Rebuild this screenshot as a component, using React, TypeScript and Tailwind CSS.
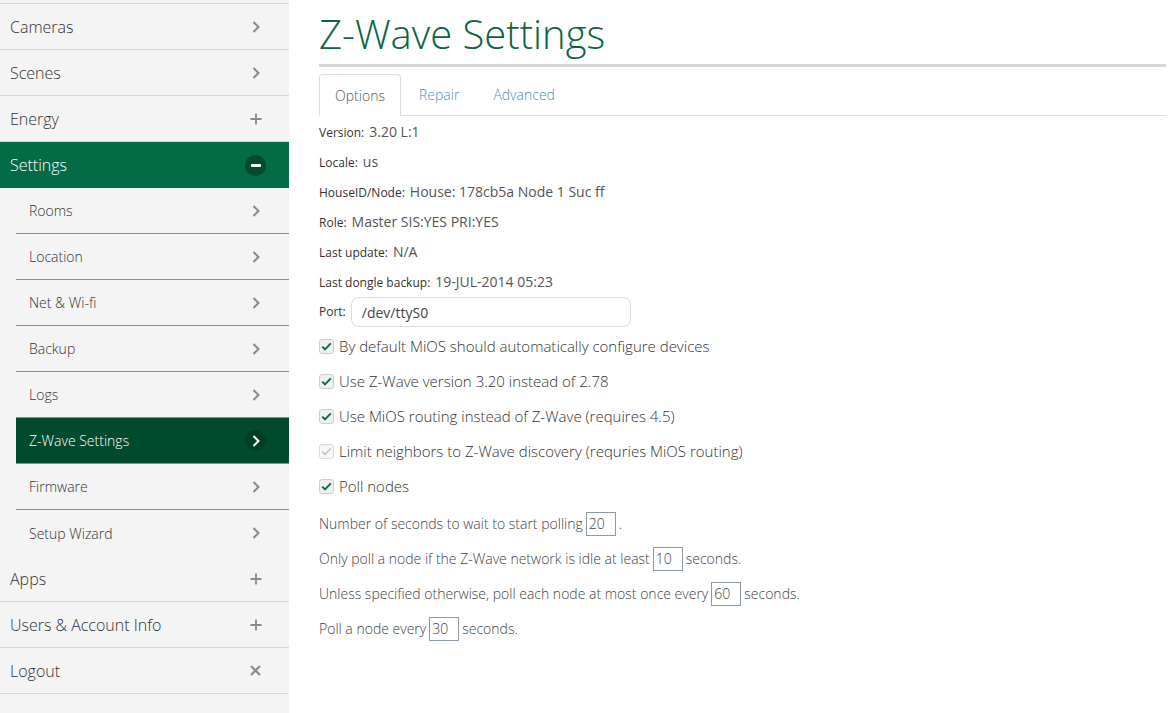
import React from "react";

const Chevron = ({ className = "" }: { className?: string }) => (
  <svg width="10" height="14" viewBox="0 0 10 14" className={className}>
    <path d="M2.5 2 L7.5 7 L2.5 12" fill="none" stroke="currentColor" strokeWidth="2" />
  </svg>
);

const Plus = () => (
  <svg width="12" height="12" viewBox="0 0 12 12">
    <path d="M6 0.5 V11.5 M0.5 6 H11.5" stroke="currentColor" strokeWidth="1.8" />
  </svg>
);

const Times = () => (
  <svg width="11" height="11" viewBox="0 0 11 11">
    <path d="M1 1 L10 10 M10 1 L1 10" stroke="currentColor" strokeWidth="2.2" />
  </svg>
);

type Item = { label: string; icon: "chev" | "plus" | "x" | "minus"; sub?: boolean; active?: boolean; open?: boolean };

const items: Item[] = [
  { label: "Cameras", icon: "chev" },
  { label: "Scenes", icon: "chev" },
  { label: "Energy", icon: "plus" },
  { label: "Settings", icon: "minus", open: true },
  { label: "Rooms", icon: "chev", sub: true },
  { label: "Location", icon: "chev", sub: true },
  { label: "Net & Wi-fi", icon: "chev", sub: true },
  { label: "Backup", icon: "chev", sub: true },
  { label: "Logs", icon: "chev", sub: true },
  { label: "Z-Wave Settings", icon: "chev", sub: true, active: true },
  { label: "Firmware", icon: "chev", sub: true },
  { label: "Setup Wizard", icon: "chev", sub: true },
  { label: "Apps", icon: "plus" },
  { label: "Users & Account Info", icon: "plus" },
  { label: "Logout", icon: "x" },
];

function SideItem({ it, next }: { it: Item; next?: Item }) {
  const subLine = it.sub && next?.sub;
  if (it.open) {
    return (
      <div className="h-[46px] flex items-center justify-between bg-[#036b45] text-white pl-[10px] pr-[23px] text-[16px] font-light">
        <span>{it.label}</span>
        <span className="w-[21px] h-[21px] rounded-full bg-[#034a2f] flex items-center justify-center">
          <span className="block w-[10px] h-[3px] bg-white rounded-[1px]" />
        </span>
      </div>
    );
  }
  if (it.sub) {
    return (
      <div className="pl-[16px]">
        <div
          className={
            "h-[46px] flex items-center justify-between pl-[13px] pr-[23px] text-[14px] font-light " +
            (it.active ? "bg-[#004a2d] text-white " : "text-[#333] ") +
            (subLine ? "border-b border-[#8c8c8c]" : "")
          }
        >
          <span>{it.label}</span>
          {it.active ? (
            <span className="w-[21px] h-[21px] rounded-full bg-[#003f26] flex items-center justify-center text-white">
              <Chevron />
            </span>
          ) : (
            <span className="w-[21px] flex justify-center text-[#8a8a8a]">
              <Chevron />
            </span>
          )}
        </div>
      </div>
    );
  }
  return (
    <div className="h-[46px] flex items-center justify-between pl-[10px] pr-[23px] text-[16px] font-light text-[#333] border-b border-[#d6d6d6]">
      <span>{it.label}</span>
      <span className="w-[21px] flex justify-center text-[#8a8a8a]">
        {it.icon === "chev" && <Chevron />}
        {it.icon === "plus" && <Plus />}
        {it.icon === "x" && <Times />}
      </span>
    </div>
  );
}

const Check = ({ disabled }: { disabled?: boolean }) => (
  <span
    className={
      "inline-flex w-[15px] h-[15px] rounded-[3px] border items-center justify-center mr-[5px] shrink-0 " +
      (disabled ? "border-[#dcdcdc] bg-[#f7f7f7]" : "border-[#cfcfcf] bg-[#efefef]")
    }
  >
    <svg width="11" height="9" viewBox="0 0 11 9">
      <path
        d="M1.2 4.6 L4 7.3 L9.8 1.3"
        fill="none"
        stroke={disabled ? "#c8c8c8" : "#0e6b44"}
        strokeWidth="1.9"
      />
    </svg>
  </span>
);

const NumBox = ({ v }: { v: string }) => (
  <span className="inline-flex items-center w-[30px] h-[24px] border border-[#8c9aa6] px-[2px] mx-[3px] text-[14px] text-[#444]">
    {v}
  </span>
);

export default function App() {
  const info: [string, string][] = [
    ["Version:", "3.20 L:1"],
    ["Locale:", "us"],
    ["HouseID/Node:", "House: 178cb5a Node 1 Suc ff"],
    ["Role:", "Master SIS:YES PRI:YES"],
    ["Last update:", "N/A"],
    ["Last dongle backup:", "19-JUL-2014 05:23"],
  ];
  const checks: [string, boolean][] = [
    ["By default MiOS should automatically configure devices", false],
    ["Use Z-Wave version 3.20 instead of 2.78", false],
    ["Use MiOS routing instead of Z-Wave (requires 4.5)", false],
    ["Limit neighbors to Z-Wave discovery (requries MiOS routing)", true],
    ["Poll nodes", false],
  ];
  return (
    <div
      className="flex w-[1169px] h-[713px] bg-white overflow-hidden"
      style={{ fontFamily: '"Open Sans", "Noto Sans", sans-serif' }}
    >
      <div className="w-[289px] shrink-0 bg-[#f4f4f4] h-full">
        <div className="h-[4px] border-b border-[#d6d6d6]" />
        {items.map((it, i) => (
          <SideItem key={it.label} it={it} next={items[i + 1]} />
        ))}
      </div>
      <div className="flex-1 pl-[30px] pr-[3px]">
        <h1 className="text-[40px] font-light leading-none text-[#0b6442] pt-[14px] h-[64px]">
          Z-Wave Settings
        </h1>
        <div className="h-[3px] bg-[#d6d6d6]" />
        <div className="mt-[7px] flex border-b border-[#dddddd] h-[42px] font-light">
          <div className="w-[82px] h-[42px] border border-[#dddddd] border-b-white rounded-t-[4px] bg-white flex items-center justify-center text-[14px] text-[#555] -mb-px">
            Options
          </div>
          <div className="px-[18px] flex items-center text-[14px] text-[#4f8dba]">Repair</div>
          <div className="px-[16px] flex items-center text-[14px] text-[#4f8dba]">Advanced</div>
        </div>
        <div>
          {info.map(([l, v]) => (
            <div key={l} className="h-[30px] flex items-baseline pt-[5px] text-[#333]">
              <span className="text-[12px]">{l}</span>
              <span className="text-[14px] text-[#555] ml-[5px]">{v}</span>
            </div>
          ))}
          <div className="flex items-center h-[30px] mt-[1px]">
            <span className="text-[12px] text-[#333]">Port:</span>
            <div className="ml-[5px] w-[280px] h-[30px] rounded-[8px] border border-[#dddddd] flex items-center pl-[10px] text-[14px] text-[#444]">
              /dev/ttyS0
            </div>
          </div>
          <div className="pt-[2px] font-light">
            {checks.map(([t, d]) => (
              <div key={t} className="h-[35px] flex items-center text-[15px] text-[#333]">
                <Check disabled={d} />
                <span>{t}</span>
              </div>
            ))}
          </div>
          <div className="pt-[2px] text-[14px] text-[#444] font-light">
            <div className="h-[35px] flex items-center">
              Number of seconds to wait to start polling<NumBox v="20" />.
            </div>
            <div className="h-[35px] flex items-center">
              Only poll a node if the Z-Wave network is idle at least<NumBox v="10" />seconds.
            </div>
            <div className="h-[35px] flex items-center">
              Unless specified otherwise, poll each node at most once every<NumBox v="60" />seconds.
            </div>
            <div className="h-[35px] flex items-center">
              Poll a node every<NumBox v="30" />seconds.
            </div>
          </div>
        </div>
      </div>
    </div>
  );
}
